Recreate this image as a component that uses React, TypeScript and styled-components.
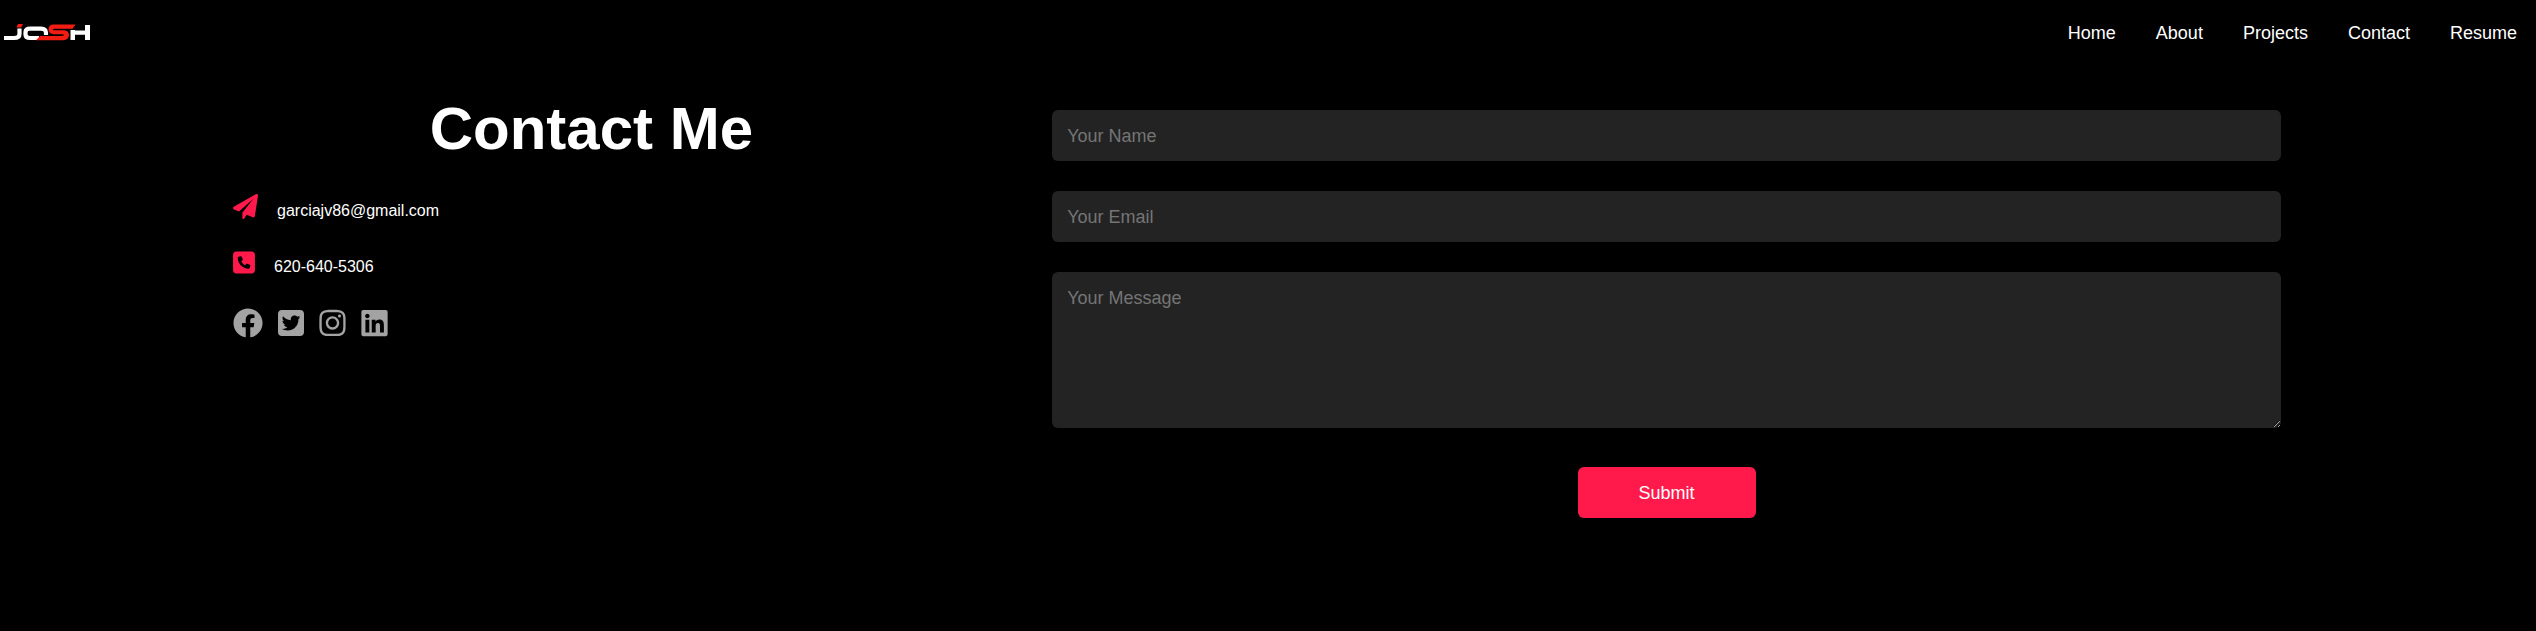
import React from 'react';
import styled, { createGlobalStyle } from 'styled-components';
import { FaFacebook, FaInstagram, FaLinkedin } from 'react-icons/fa';
import { FaSquarePhone, FaSquareTwitter } from 'react-icons/fa6';

const GlobalStyle = createGlobalStyle`
  * { box-sizing: border-box; margin: 0; padding: 0; }
  body {
    background: #000;
    color: #fff;
    font-family: 'Liberation Sans', Arial, Helvetica, sans-serif;
  }
`;

const Header = styled.header`
  display: flex;
  align-items: center;
  justify-content: space-between;
  height: 66px;
  padding: 0 19px 0 3px;
`;

const LogoLink = styled.a`
  display: flex;
`;

const NavList = styled.ul`
  display: flex;
  gap: 40px;
  list-style: none;
`;

const NavLink = styled.a`
  color: #fff;
  font-size: 18px;
  line-height: 20px;
  text-decoration: none;
`;

const Contact = styled.main`
  display: flex;
  justify-content: space-between;
  padding: 29px 255px 40px 233px;
`;

const Details = styled.section`
  flex: 0 0 35%;
`;

const Title = styled.h1`
  margin-bottom: 31px;
  font-size: 60px;
  line-height: 68px;
  text-align: center;
`;

const InfoRow = styled.p`
  display: flex;
  align-items: flex-start;
  gap: 19px;
  height: 26px;
  margin-bottom: 30px;
  font-size: 16px;
  line-height: 33px;

  svg {
    flex: none;
    color: #ff1a4b;
    font-size: 25px;
  }
`;

const PhoneIcon = styled(FaSquarePhone)`
  width: 22px;
`;

const Socials = styled.nav`
  display: flex;
  gap: 15px;
  padding-top: 2px;
`;

const SocialLink = styled.a<{ $width: number }>`
  display: flex;
  color: #a3a3a3;
  font-size: 30px;

  svg {
    width: ${({ $width }) => $width}px;
  }
`;

const Form = styled.form`
  flex: 0 0 60%;
  display: flex;
  flex-direction: column;
  gap: 30px;
  padding-top: 15px;
`;

const Field = styled.input`
  display: block;
  width: 100%;
  height: 51px;
  padding: 16px 15px 14px;
  border: 0;
  border-radius: 6px;
  outline: none;
  background: #232323;
  color: #fff;
  font-family: inherit;
  font-size: 18px;
  line-height: 21px;

  &::placeholder {
    color: #757575;
    opacity: 1;
  }
`;

const MessageField = styled(Field)`
  height: 156px;
  resize: vertical;
`;

const SubmitButton = styled.button`
  align-self: center;
  margin-top: 9px;
  padding: 16px 61px 14px;
  border: 0;
  border-radius: 6px;
  background: #ff1a4b;
  color: #fff;
  font-family: inherit;
  font-size: 18px;
  line-height: 21px;
  cursor: pointer;
`;

const Logo = () => (
  <svg width="88" height="18" viewBox="0 0 88 18" role="img" aria-label="Josh">
    <g fill="none" stroke="#fff" strokeWidth="4.200">
      <path d="M1 14H11Q16.500 14 16.500 10V4.500" />
      <path d="M36 14H27Q22.500 14 22.500 10.500V8Q22.500 4.600 27 4.600H38Q43 4.600 43 9V11" />
    </g>
    <path d="M67.500 6H72V6.500H82V1H87V16H82V10.800H72V16H67.500Z" fill="#fff" />
    <path d="M15 0H20L18 3.500H13.500Z" fill="#f21d12" />
    <path d="M37 12H58Q61 12 61 11T58 10.200H51Q45.500 10.200 45.500 5.300T51 0.500H72.500L69.500 4.700H51.500Q49.800 4.700 49.800 5.500T51.500 6.200H60Q66 6.200 66 11T60 16.200H33Z" fill="#f21d12" />
  </svg>
);

const PaperPlane = () => (
  <svg width="1em" height="1em" viewBox="0 0 512 512" fill="currentColor" aria-hidden="true">
    <path d="M511.6 36.860l-64 415.100c-1.500 9.734-7.375 18.220-15.970 23.050c-4.844 2.719-10.270 4.097-15.680 4.097c-4.188 0-8.319-.8154-12.290-2.472l-122.600-51.100l-50.860 76.290C226.300 508.500 219.800 512 212.800 512C201.300 512 192 502.700 192 491.200v-96.180c0-7.115 2.372-14.030 6.742-19.640L416 96l-293.700 264.300L19.690 317.500C8.438 312.800 .8125 302.200 .0625 289.100s5.469-23.720 16.060-29.770l448-255.100c10.690-6.109 23.880-5.547 34 1.406S513.500 24.720 511.600 36.860z" />
  </svg>
);

const pages = ['Home', 'About', 'Projects', 'Contact', 'Resume'];

const socials = [
  { name: 'Facebook', Icon: FaFacebook, width: 30 },
  { name: 'Twitter', Icon: FaSquareTwitter, width: 26 },
  { name: 'Instagram', Icon: FaInstagram, width: 27 },
  { name: 'LinkedIn', Icon: FaLinkedin, width: 27 },
];

export default function App() {
  return (
    <>
      <GlobalStyle />
      <Header>
        <LogoLink href="#home"><Logo /></LogoLink>
        <nav>
          <NavList>
            {pages.map((page) => (
              <li key={page}><NavLink href={`#${page.toLowerCase()}`}>{page}</NavLink></li>
            ))}
          </NavList>
        </nav>
      </Header>
      <Contact>
        <Details>
          <Title>Contact Me</Title>
          <InfoRow><PaperPlane />garciajv86@gmail.com</InfoRow>
          <InfoRow><PhoneIcon />620-640-5306</InfoRow>
          <Socials aria-label="Social profiles">
            {socials.map(({ name, Icon, width }) => (
              <SocialLink key={name} href={`#${name.toLowerCase()}`} aria-label={name} $width={width}>
                <Icon />
              </SocialLink>
            ))}
          </Socials>
        </Details>
        <Form>
          <Field type="text" name="name" placeholder="Your Name" aria-label="Your Name" required />
          <Field type="email" name="email" placeholder="Your Email" aria-label="Your Email" required />
          <MessageField as="textarea" name="message" placeholder="Your Message" aria-label="Your Message" />
          <SubmitButton type="submit">Submit</SubmitButton>
        </Form>
      </Contact>
    </>
  );
}
